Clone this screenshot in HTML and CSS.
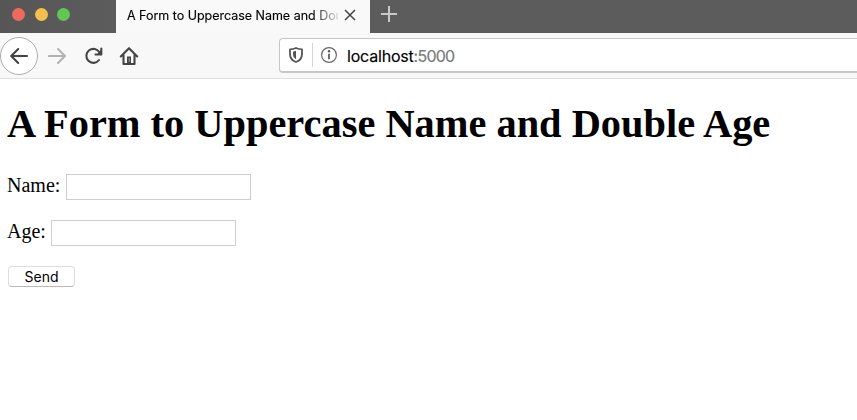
FILE: index.html
```html
<!DOCTYPE html>
<html lang="en">
<head>
<meta charset="utf-8">
<title>A Form to Uppercase Name and Double Age</title>
<link rel="stylesheet" href="styles.css">
</head>
<body>
<header class="tabbar">
  <div class="lights"><span class="light red"></span><span class="light yellow"></span><span class="light green"></span></div>
  <div class="tab">
    <span class="tab-title">A Form to Uppercase Name and Double Age</span>
    <svg class="close" width="12" height="12" viewBox="0 0 12 12"><path d="M1 1l10 10M11 1L1 11"/></svg>
  </div>
  <svg class="plus" width="16" height="16" viewBox="0 0 16 16"><path d="M8 0v16M0 8h16"/></svg>
</header>
<nav class="toolbar">
  <div class="back"><svg class="icon" width="20" height="18" viewBox="0 0 20 18"><path d="M18 9H2.500M9.200 2L2.200 9l7 7"/></svg></div>
  <svg class="icon forward" width="20" height="18" viewBox="0 0 20 18"><path d="M1 9h16M10 2l7 7-7 7"/></svg>
  <svg class="icon reload" width="18" height="18" viewBox="0 0 18 18"><path d="M14 13A7 7 0 1 1 14.500 5.500"/><path d="M16.300 1.500v6H10.500"/><path class="solid" d="M16.300 3v4.500H12z"/></svg>
  <svg class="icon home" width="20" height="20" viewBox="0 0 20 20"><path d="M1.800 10.500L10 2.200l8.200 8.300M4.500 9v9h11V9"/><path class="solid" d="M8 10.500h4V18H8z"/><path class="door" d="M10.300 12.500v3"/></svg>
  <div class="urlbar">
    <svg class="shield" width="16" height="18" viewBox="0 0 16 18"><path d="M8 2C6 3 4 3.400 2 3.400V8c0 4 2.300 6.800 6 8 3.700-1.200 6-4 6-8V3.400C12 3.400 10 3 8 2z"/><path class="solid" d="M8 4.800C7 5.300 6 5.600 5 5.700V8c0 2.300 1 4.300 3 5.300z"/></svg>
    <span class="divider"></span>
    <svg class="info" width="18" height="18" viewBox="0 0 18 18"><circle cx="9" cy="9" r="7.400"/><path d="M9 7.800v5.400"/><circle class="solid" cx="9" cy="5.200" r="1.200"/></svg>
    <span class="url">localhost<span class="port">:5000</span></span>
  </div>
</nav>
<main>
  <h1>A Form to Uppercase Name and Double Age</h1>
  <form>
    <div class="field"><label for="name">Name:</label><input id="name" type="text"></div>
    <div class="field"><label for="age">Age:</label><input id="age" type="text"></div>
    <button type="button">Send</button>
  </form>
</main>
</body>
</html>
```
FILE: styles.css
```css
* { box-sizing: border-box; }
body { margin: 0; height: 420px; overflow: hidden; background: #fff; color: #000; font-family: "Liberation Serif", serif; }
svg { flex: none; fill: none; }
.tabbar { display: flex; height: 33px; background: #5b5c5b; }
.lights { display: flex; width: 116px; padding: 8px 0 0 12px; gap: 9.500px; background: linear-gradient(90deg, #555655, #5b5c5b); }
.light { width: 13px; height: 13px; border-radius: 50%; }
.red { background: #ee6a5f; }
.yellow { background: #f5bf4f; }
.green { background: #61c654; }
.tab { display: flex; width: 254px; padding-left: 11px; background: #f9f9fa; }
.tab-title { width: 211px; overflow: hidden; white-space: nowrap; font: 12.500px/31px Inter, sans-serif; letter-spacing: -0.020px; -webkit-text-stroke: 0.150px; mask-image: linear-gradient(90deg, #000 185px, transparent 214px); }
.close { margin: 9px 0 0 6px; stroke: #444; stroke-width: 1.500; }
.plus { margin: 6px 0 0 11px; stroke: #c8c8c8; stroke-width: 2; }
.toolbar { display: flex; align-items: center; height: 46px; background: #f8f8f8; border-bottom: 1px solid #dfdfdf; }
.back { display: grid; place-items: center; flex: none; width: 38px; height: 38px; border: 1px solid #adadad; border-radius: 50%; background: #fff; }
.icon { stroke: #444; stroke-width: 2.100; stroke-linecap: round; stroke-linejoin: round; }
.forward { margin-left: 10px; stroke: #b2b2b2; }
.reload { margin-left: 17px; }
.icon .solid { fill: #444; stroke: none; }
.icon .door { stroke: #999; stroke-width: 1.200; }
.home { margin-left: 16px; }
.urlbar { display: flex; align-items: center; flex: 1; height: 35px; margin-left: 140px; padding-left: 8px; background: #fff; border: 1px solid #c6c6c6; border-right: 0; border-bottom-width: 2px; border-radius: 4px 0 0 4px; }
.shield { stroke: #555; stroke-width: 1.800; stroke-linejoin: round; }
.shield .solid { fill: #555; stroke: none; }
.divider { width: 1px; height: 24px; margin: 0 7px 0 8px; background: #d5d5d5; }
.info { stroke: #666; stroke-width: 1.200; }
.info path { stroke-width: 1.900; }
.info .solid { fill: #555; stroke: none; }
.url { margin: 2px 0 0 9px; font: 16px/24px Inter, sans-serif; letter-spacing: -0.200px; -webkit-text-stroke: 0.150px; }
.port { color: #777; letter-spacing: -0.750px; }
main { padding: 20px 7px 0; }
h1 { margin: 0; font-size: 40.400px; line-height: 49px; white-space: nowrap; }
form { margin-top: 26px; font-size: 20px; }
.field { display: flex; height: 26px; margin-bottom: 20px; line-height: 22px; }
input { width: 185px; height: 26px; margin: 0 0 0 5.500px; padding: 2px 4px; border: 1px solid #cecece; background: #fff; font: 14px Inter, sans-serif; }
button { display: block; width: 67px; height: 21px; margin: 0 0 0 1px; padding: 0; border: 1px solid #dcdcdc; border-bottom-color: #b8b8b8; border-radius: 4px; background: #fff; color: #000; font: 14px/18px Inter, sans-serif; }
```
